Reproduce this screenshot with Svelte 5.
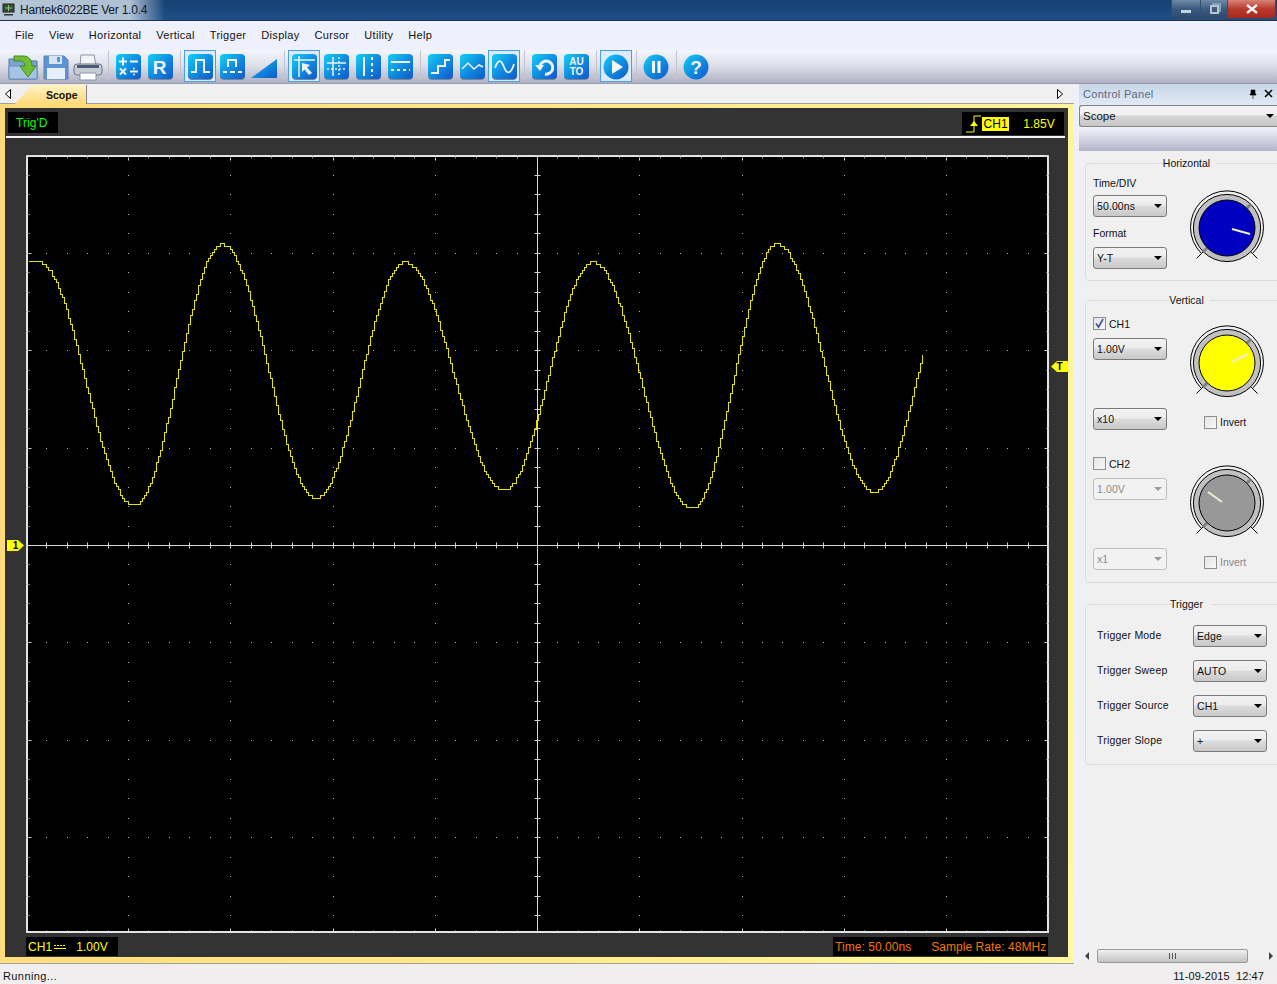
<script>
	const menus = ['File', 'View', 'Horizontal', 'Vertical', 'Trigger', 'Display', 'Cursor', 'Utility', 'Help'];

	// toolbar groups, a separator goes between each of them
	const tools = [
		[['open'], ['save'], ['print']],
		[['calc'], ['ref']],
		[['pulse', true], ['pulse2'], ['wedge']],
		[['pick', true], ['grid'], ['vcur'], ['hcur']],
		[['step'], ['tri'], ['sine', true]],
		[['undo'], ['auto']],
		[['play', true]],
		[['pause']],
		[['help']]
	];

	const triggerRows = [
		['Trigger Mode', 'Edge'],
		['Trigger Sweep', 'AUTO'],
		['Trigger Source', 'CH1'],
		['Trigger Slope', '+']
	];

	// plot geometry, in page pixels
	const cx = 537;
	const cy = 545;
	const dx = 20.45;
	const dy = 19.48;

	let dots = [];
	let ticks = [];
	for (let i = -25; i <= 25; i++) {
		const x = Math.round(cx + i * dx);
		const major = i % 5 === 0;
		for (let r = -4; r <= 4; r++) {
			if (i !== 0 && r !== 0) dots.push([x, Math.round(cy + r * 5 * dy)]);
		}
		ticks.push([x, cy - 3, x, cy + 3]);
		ticks.push([x, 157, x, 157 + (major ? 3 : 1)]);
		ticks.push([x, 931 - (major ? 3 : 1), x, 931]);
	}
	for (let j = -20; j <= 20; j++) {
		const y = Math.round(cy + j * dy);
		const major = j % 5 === 0;
		for (let c = -5; c <= 5; c++) {
			if (j !== 0 && c !== 0 && j % 5 !== 0) dots.push([Math.round(cx + c * 5 * dx), y]);
		}
		ticks.push([cx - 3, y, cx + 3, y]);
		ticks.push([28, y, 28 + (major ? 3 : 1), y]);
		ticks.push([1047 - (major ? 3 : 1), y, 1047, y]);
	}

	// extrema read off the reference, y snapped to 3px like the ADC steps
	const ext = [[38, 262], [133, 505], [221, 244], [315, 498], [404, 262], [503, 490], [592, 262], [691, 508], [776, 244], [873, 492], [960, 262]];
	let pts = [];
	let lastY = null;
	for (let x = 28; x <= 922; x += 2) {
		let k = 0;
		while (k < ext.length - 2 && x > ext[k + 1][0]) k++;
		const [x0, y0] = ext[k];
		const [x1, y1] = ext[k + 1];
		const t = Math.max(0, (x - x0) / (x1 - x0));
		const y = Math.round((y0 + ((y1 - y0) * (1 - Math.cos(Math.PI * t))) / 2) / 3) * 3 + 0.5;
		if (lastY !== null && y !== lastY) pts.push(x + 0.5 + ',' + lastY);
		pts.push(x + 0.5 + ',' + y);
		lastY = y;
	}
	const trace = pts.join(' ');
</script>

{#snippet sel(value, off = false)}
	<div class="sel" class:off><span>{value}</span><i></i></div>
{/snippet}

{#snippet knob(fill, x1, y1, x2, y2)}
	<svg class="knob" width="76" height="76" viewBox="-38 -38 76 76">
		<path d="M-25.5 25.5A36.5 36.5 0 1 1 25.5 25.5" fill="none" stroke="#000" />
		<path d="M-22 22L-30.5 30.5M22 22L30.5 30.5" stroke="#000" />
		<circle r="33.6" fill="#c0c0c0" stroke="#000" />
		<path d="M-20 20L-24 24M20 -20L24 -24" stroke="#808080" stroke-width="3" />
		<circle r="28" fill={fill} stroke="#000" />
		<line {x1} {y1} {x2} {y2} stroke="#eeeed0" stroke-width="2" />
	</svg>
{/snippet}

{#snippet check(label, on = false, off = false)}
	<label class="chk" class:off>
		<span class="box">
			{#if on}
				<svg width="11" height="11" viewBox="0 0 11 11"><path d="M2 5.5L4.5 9L9 1" fill="none" stroke="#4a5f9c" stroke-width="1.8" /></svg>
			{/if}
		</span>
		{label}
	</label>
{/snippet}

{#snippet icon(name)}
	{#if name === 'open'}
		<svg width="32" height="27" viewBox="0 0 32 27">
			<path d="M1 5h10l2 2h16v18H1z" fill="#7aa4d4" stroke="#4f74a4" />
			<path d="M1 12h28v13H1z" fill="#a4c4e6" stroke="#6a8cb8" />
			<path d="M6 2h9c6 0 9 4 9 10h4l-8 11-8-11h5c0-3-2-5-5-5H6z" fill="#74bc34" stroke="#3f8a22" />
		</svg>
	{:else if name === 'save'}
		<svg width="26" height="27" viewBox="0 0 26 27">
			<path d="M1 2h20l4 4v19H1z" fill="#5f94d4" stroke="#5a80b0" />
			<rect x="6" y="2" width="13" height="8" fill="#d7e4f2" />
			<rect x="14" y="3" width="3" height="5" fill="#5f94d4" />
			<rect x="4" y="14" width="18" height="11" fill="#e6eef8" />
		</svg>
	{:else if name === 'print'}
		<svg width="30" height="27" viewBox="0 0 30 27">
			<path d="M8 1h13l2 10H7z" fill="#f4f4f6" stroke="#8d93a0" />
			<rect x="1" y="10" width="28" height="11" rx="3" fill="#c8ccd6" stroke="#6f7682" />
			<rect x="4" y="11" width="22" height="3" fill="#4a5c78" />
			<path d="M7 19h16v7H7z" fill="#fff" stroke="#8d93a0" />
		</svg>
	{:else if name === 'wedge'}
		<svg width="28" height="25" viewBox="0 0 28 25"><path d="M1 23L27 4v19z" fill="url(#blue)" /></svg>
	{:else if name === 'play' || name === 'pause' || name === 'help'}
		<svg width="26" height="26" viewBox="0 0 26 26">
			<circle cx="13" cy="13" r="12.5" fill="url(#blue)" />
			{#if name === 'play'}
				<path d="M9 6l11 7-11 7z" fill="#f4f6f8" />
			{:else if name === 'pause'}
				<path d="M9 7h3v12H9zM14.5 7h3v12h-3z" fill="#f4f6f8" />
			{:else}
				<text x="13" y="20" class="glyph big">?</text>
			{/if}
		</svg>
	{:else}
		<svg width="25" height="26" viewBox="0 0 25 26">
			<rect x="0" y="1" width="25" height="25" rx="4" fill="#7c8598" />
			<rect x="0" y="0" width="25" height="25" rx="4" fill="url(#blue)" />
			<g fill="none" stroke="#eef2f0" stroke-width="2">
				{#if name === 'calc'}
					<path d="M3 7.5H11M7 3.5V11.5M14 7.5H22M4 14.5L10 20.5M10 14.5L4 20.5M14 17.5H22" />
					<circle cx="18" cy="14.5" r="1" fill="#eef2f0" stroke="none" />
					<circle cx="18" cy="20.5" r="1" fill="#eef2f0" stroke="none" />
				{:else if name === 'ref'}
					<text x="11.5" y="20" class="glyph big">R</text>
				{:else if name === 'pulse'}
					<path d="M3 18H8V6H16V18H22" />
				{:else if name === 'pulse2'}
					<path d="M8 13V6H16V13M3 18H7M10 18H15M18 18H22" />
				{:else if name === 'pick'}
					<path d="M7 2V23M2 6H23" stroke-width="1.5" />
					<path d="M10 9L10 18L12.5 15.5L17 21L20 19L15 13.5L18 11Z" fill="#eef2f0" stroke="none" />
				{:else if name === 'grid'}
					<path d="M9 3V22M3 9H22" stroke-width="1.5" />
					<path d="M15 3V22M3 15H22" stroke-width="1.5" stroke-dasharray="2 2" />
				{:else if name === 'vcur'}
					<path d="M8 3V22" />
					<path d="M16 3V22" stroke-dasharray="3 3" />
				{:else if name === 'hcur'}
					<path d="M3 8H22" />
					<path d="M3 16H22" stroke-dasharray="3 3" />
				{:else if name === 'step'}
					<path d="M3 19H10V12H17V6H22" />
				{:else if name === 'tri'}
					<path d="M2 15L8 9L14 15L19 11L23 13" stroke-width="1.5" />
				{:else if name === 'sine'}
					<path d="M3 14C6 5 9 5 12 13S19 20 22 10" stroke-width="1.8" />
				{:else if name === 'undo'}
					<path d="M8 12A6.5 6.5 0 1 1 13 20" stroke-width="3" />
					<path d="M3 11h9l-4 6z" fill="#eef2f0" stroke="none" />
				{:else if name === 'auto'}
					<text x="12.5" y="11" class="glyph small">AU</text>
					<text x="12.5" y="21" class="glyph small">TO</text>
				{/if}
			</g>
		</svg>
	{/if}
{/snippet}

<div class="win">
	<svg class="defs" width="0" height="0">
		<defs>
			<linearGradient id="blue" x1="0" y1="0" x2="1" y2="1">
				<stop offset="0" stop-color="#14d0f6" />
				<stop offset="0.55" stop-color="#1088e0" />
				<stop offset="1" stop-color="#1058c8" />
			</linearGradient>
		</defs>
	</svg>

	<header class="title">
		<svg class="app" width="13" height="13" viewBox="0 0 13 13">
			<rect x="1" y="1" width="11" height="8" fill="#3b4a3c" stroke="#222" />
			<path d="M6.5 2v6M3 5h7" stroke="#7fd06a" />
			<path d="M2 11h9v1.5H2z" fill="#333" />
		</svg>
		<span>Hantek6022BE Ver 1.0.4</span>
		<div class="caps">
			<div class="cap min"><b></b></div>
			<div class="cap max"><b></b></div>
			<div class="cap close">
				<svg width="14" height="10" viewBox="0 0 14 10"><path d="M2 1l10 8M12 1L2 9" stroke="#f4f4f4" stroke-width="2.4" /></svg>
			</div>
		</div>
	</header>

	<nav class="menu">
		{#each menus as m}
			<span>{m}</span>
		{/each}
	</nav>

	<div class="tools">
		{#each tools as group, g}
			{#if g > 0}<div class="sep"></div>{/if}
			{#each group as [name, active]}
				<div class="tool" class:active>{@render icon(name)}</div>
			{/each}
		{/each}
	</div>

	<div class="body">
		<section class="pane">
			<div class="tabs">
				<svg class="tabarrow" width="6" height="10" viewBox="0 0 6 10"><path d="M5.5 .5V9.5L.5 5Z" fill="#fff" stroke="#000" /></svg>
				<div class="tab">Scope</div>
				<svg class="tabarrow end" width="6" height="10" viewBox="0 0 6 10"><path d="M.5 .5V9.5L5.5 5Z" fill="#fff" stroke="#000" /></svg>
			</div>
			<div class="frame">
				<div class="dark">
					<div class="info">
						<div class="lab green">Trig'D</div>
						<div class="lab trig">
							<svg width="16" height="18" viewBox="0 0 16 18"><path d="M0 17H8V1H15" fill="none" stroke="#ff0" /><path d="M4 11H12L8 6Z" fill="#ff0" /></svg>
							<span class="hl">CH1</span>
							<span class="volts">1.85V</span>
						</div>
					</div>
					<div class="stage">
						<div class="marker one">1</div>
						<svg class="plot" width="1024" height="779" viewBox="26 155 1024 779">
							<rect x="27" y="156" width="1021" height="776" fill="#000" stroke="#e4e4e4" stroke-width="2" />
							{#each dots as [x, y]}
								<rect {x} {y} width="1" height="1" fill="#b0b0b0" />
							{/each}
							<path d="M28 545.5H1047M537.5 157V931" stroke="#d8d8d8" />
							{#each ticks as [x1, y1, x2, y2]}
								<line x1={x1 + 0.5} y1={y1 + 0.5} x2={x2 + 0.5} y2={y2 + 0.5} stroke="#d0d0d0" />
							{/each}
							<polyline points={trace} fill="none" stroke="#e4e400" stroke-width="1" shape-rendering="crispEdges" />
						</svg>
						<div class="marker tee">T</div>
					</div>
					<div class="foot">
						<div class="lab ch"><span>CH1</span><svg width="12" height="6" viewBox="0 0 12 6"><path d="M0 1.5H12" stroke="#ff0" stroke-dasharray="2 1" /><path d="M0 4.5H12" stroke="#ff0" /></svg><span class="amp">1.00V</span></div>
						<div class="lab orange"><span>Time: 50.00ns</span><span>Sample Rate: 48MHz</span></div>
					</div>
				</div>
			</div>
		</section>

		<aside class="side">
			<div class="sidehead">
				<span>Control Panel</span>
				<svg width="8" height="10" viewBox="0 0 8 10"><path d="M2 1h4v4h1v1H1V5h1zM4 6v4" fill="#000" stroke="#000" stroke-width="0.6" /></svg>
				<svg width="9" height="9" viewBox="0 0 9 9"><path d="M1 1l7 7M8 1L1 8" stroke="#000" stroke-width="1.5" /></svg>
			</div>
			<div class="combo"><span>Scope</span><i></i></div>
			<div class="band"></div>
			<div class="groups">
				<fieldset class="horiz">
					<legend>Horizontal</legend>
					<div class="col">
						<div class="cap1">Time/DIV</div>
						{@render sel('50.00ns')}
						<div class="cap2">Format</div>
						{@render sel('Y-T')}
					</div>
					<div class="knobcol">{@render knob('#0000c0', 5, 1, 23, 6)}</div>
				</fieldset>

				<fieldset class="vert">
					<legend>Vertical</legend>
					<div class="chan">
						<div class="col">
							{@render check('CH1', true)}
							{@render sel('1.00V')}
							<div class="low">{@render sel('x10')}</div>
						</div>
						<div class="knobcol">
							{@render knob('#ffff00', 5, -1, 21, -9)}
							<div class="inv">{@render check('Invert')}</div>
						</div>
					</div>
					<div class="chan two">
						<div class="col">
							{@render check('CH2')}
							{@render sel('1.00V', true)}
							<div class="low">{@render sel('x1', true)}</div>
						</div>
						<div class="knobcol">
							{@render knob('#989898', -19, -11, -5, -1)}
							<div class="inv">{@render check('Invert', false, true)}</div>
						</div>
					</div>
				</fieldset>

				<fieldset class="trig-group">
					<legend>Trigger</legend>
					{#each triggerRows as [name, val]}
						<div class="trow">
							<span>{name}</span>
							{@render sel(val)}
						</div>
					{/each}
				</fieldset>
			</div>
			<div class="hbar">
				<i class="sa left"></i>
				<div class="thumb"><span></span></div>
				<i class="sa right"></i>
			</div>
		</aside>
	</div>

	<footer class="status">
		<span class="run">Running...</span>
		<span>11-09-2015&nbsp; 12:47</span>
	</footer>
</div>

<style>
	:global(body) {
		margin: 0;
		background: #f0f0f0;
	}

	.win {
		width: 1277px;
		height: 984px;
		overflow: hidden;
		display: flex;
		flex-direction: column;
		font-family: 'Liberation Sans', Arial, sans-serif;
		font-size: 11px;
		color: #111;
	}

	.defs {
		position: absolute;
	}

	.title {
		height: 21px;
		box-sizing: border-box;
		display: flex;
		align-items: center;
		padding-left: 2px;
		gap: 5px;
		font-size: 12px;
		color: #101828;
		border-bottom: 1px solid #22344c;
		background:
			linear-gradient(90deg, rgba(190, 205, 220, 0.95) 0, rgba(190, 205, 220, 0.9) 130px, rgba(190, 205, 220, 0) 165px),
			linear-gradient(180deg, #16406f, #1e5088);
	}

	.title span {
		letter-spacing: -0.22px;
	}

	.app {
		margin-top: -2px;
	}

	.caps {
		margin-left: auto;
		margin-right: 1px;
		height: 18px;
		align-self: flex-start;
		display: flex;
		border: 1px solid #304a68;
		border-top: 0;
		border-radius: 0 0 4px 4px;
		overflow: hidden;
	}

	.cap {
		display: flex;
		align-items: center;
		justify-content: center;
		border-right: 1px solid #33506f;
		background: linear-gradient(180deg, #6f8aa8, #3a5a80 50%, #2a4a70);
	}

	.min {
		width: 28px;
	}

	.min b {
		width: 10px;
		height: 3px;
		margin-top: 5px;
		background: #c8d0d8;
	}

	.max {
		width: 26px;
	}

	.max b {
		width: 5px;
		height: 5px;
		border: 2px solid #b8c4d0;
		box-shadow: 2px -2px 0 0 #8a9cb0;
	}

	.close {
		width: 47px;
		border-right: 0;
		background: linear-gradient(180deg, #d88478, #b8392c 50%, #a8281e);
	}

	.menu {
		height: 29px;
		box-sizing: border-box;
		display: flex;
		align-items: center;
		gap: 15px;
		padding: 0 0 2px 15px;
		background: #eef1fb;
		letter-spacing: 0.3px;
	}

	.tools {
		height: 34px;
		box-sizing: border-box;
		display: flex;
		padding-left: 8px;
		border-bottom: 1px solid #9a9aa8;
		background: linear-gradient(180deg, #f4f6fd, #dfe1ea 45%, #b0b0c4);
	}

	.tool {
		width: 32px;
		height: 32px;
		box-sizing: border-box;
		display: flex;
		align-items: center;
		justify-content: center;
		padding-top: 2px;
	}

	.tool.active {
		border: 1px solid #4a9ef0;
		background: #dcebfb;
	}

	.sep {
		width: 8px;
		display: flex;
	}

	.sep::after {
		content: '';
		width: 1px;
		height: 30px;
		margin: 0 auto;
		background: #c4c4d0;
	}

	.glyph {
		font-family: 'Liberation Sans', Arial, sans-serif;
		font-weight: 700;
		font-size: 11px;
		fill: #f0f4f4;
		stroke: none;
		text-anchor: middle;
	}

	.glyph.big {
		font-size: 19px;
	}

	.glyph.small {
		font-size: 10px;
	}

	.body {
		flex: 1;
		display: flex;
		min-height: 0;
		background: #eef1fb;
	}

	.pane {
		width: 1074px;
		display: flex;
		flex-direction: column;
	}

	.tabs {
		height: 20px;
		box-sizing: border-box;
		display: flex;
		align-items: flex-end;
		background: #f0f0f0;
		border-bottom: 1px solid #a0a0a0;
	}

	.tabarrow {
		align-self: center;
		margin-left: 5px;
		margin-right: 4px;
	}

	.tabarrow.end {
		margin-left: auto;
		margin-right: 11px;
	}

	.tab {
		width: 72px;
		height: 19px;
		box-sizing: border-box;
		padding: 4px 0 0 31px;
		font-weight: 700;
		font-size: 10.5px;
		margin-bottom: -1px;
		border-right: 1px solid #888;
		background: linear-gradient(180deg, #fff3c4, #ffd97a);
		clip-path: polygon(0 100%, 17px 0, 100% 0, 100% 100%);
	}

	.frame {
		flex: 1;
		box-sizing: border-box;
		padding: 4px 6px 6px 5px;
		background: linear-gradient(100deg, #ffd97a, #ffe98a 50%, #fff8a0);
		border-bottom: 1px solid #a0a0a0;
	}

	.dark {
		height: 100%;
		display: flex;
		flex-direction: column;
		background: #333;
	}

	.info {
		height: 30px;
		box-sizing: border-box;
		display: flex;
		justify-content: space-between;
		padding: 4px 3px 0 2px;
		align-items: flex-start;
		margin-left: 1px;
		margin-right: 3px;
		border-bottom: 2px solid #f4f4f4;
	}

	.lab {
		background: #000;
		font-size: 12px;
		letter-spacing: 0.05px;
		display: flex;
		align-items: center;
		box-sizing: border-box;
	}

	.green {
		width: 50px;
		height: 21px;
		padding-left: 8px;
		color: #0f0;
	}

	.trig {
		width: 102px;
		height: 23px;
		margin-right: -2px;
		padding-left: 4px;
		color: #ff0;
	}

	.hl {
		background: #ff0;
		color: #000;
		padding: 0 1.5px;
		line-height: 14px;
	}

	.volts {
		margin-left: 14px;
	}

	.stage {
		position: relative;
		padding: 17px 0 0 21px;
		display: flex;
	}

	.plot {
		display: block;
	}

	.marker {
		position: absolute;
		height: 11px;
		background: #ff0;
		color: #000;
		font-size: 10px;
		line-height: 11px;
		text-align: center;
		font-weight: 700;
	}

	.one {
		left: 2px;
		top: 402px;
		width: 17px;
		clip-path: polygon(0 0, 11px 0, 100% 50%, 11px 100%, 0 100%);
	}

	.tee {
		left: 1046px;
		top: 223px;
		width: 17px;
		clip-path: polygon(6px 0, 100% 0, 100% 100%, 6px 100%, 0 50%);
	}

	.foot {
		display: flex;
		justify-content: space-between;
		padding: 3px 20px 0 21px;
	}

	.ch {
		width: 92px;
		height: 19px;
		padding-left: 2px;
		color: #ff0;
		gap: 2px;
	}

	.amp {
		margin-left: 8px;
	}

	.orange {
		width: 215px;
		height: 19px;
		padding: 0 1px 0 2px;
		color: #f07800;
		justify-content: flex-start;
		gap: 20px;
	}

	.side {
		width: 203px;
		display: flex;
		flex-direction: column;
	}

	.sidehead {
		height: 21px;
		margin-left: 5px;
		padding: 0 4px 2px;
		box-sizing: border-box;
		display: flex;
		align-items: center;
		gap: 7px;
		color: #5a6a80;
		letter-spacing: 0.3px;
		background: linear-gradient(180deg, #c8d6e6, #e0eaf6);
	}

	.sidehead span {
		margin-right: auto;
	}

	.combo {
		height: 22px;
		margin-left: 5px;
		box-sizing: border-box;
		display: flex;
		align-items: center;
		justify-content: space-between;
		padding: 0 3px;
		font-size: 11.5px;
		border: 1px solid #808080;
		border-right: 0;
		border-radius: 3px 0 0 3px;
		background: linear-gradient(180deg, #f4f4f4 0, #f0f0f0 45%, #d4d4d4 50%, #c8c8c8);
	}

	.combo i,
	.sel i {
		width: 0;
		height: 0;
		border: 4px solid transparent;
		border-top: 4px solid #000;
		border-bottom: 0;
	}

	.band {
		height: 24px;
		margin-left: 5px;
		background: linear-gradient(180deg, #f2f4fc, #b4b4c8);
	}

	.groups {
		flex: 1;
		margin-left: 5px;
		padding: 6px 0 0 6px;
		background: #f0f0f0;
		overflow: hidden;
	}

	fieldset {
		box-sizing: border-box;
		width: 204px;
		margin: 0;
		border: 1px solid #dcdcdc;
		border-radius: 4px;
		padding: 0 0 0 7px;
		display: flex;
	}

	legend {
		margin: 0 auto;
		padding: 0 2px;
		line-height: 12px;
		font-size: 10.5px;
		transform: translateX(-4px);
	}

	.horiz {
		height: 124px;
		margin-bottom: 13px;
		padding-top: 8px;
		gap: 22px;
	}

	.vert {
		height: 289px;
		margin-bottom: 15px;
		padding-top: 9px;
		flex-direction: column;
	}

	.trig-group {
		height: 167px;
		padding: 15px 0 0 11px;
		flex-direction: column;
		gap: 13px;
	}

	.trig-group legend {
		transform: translateX(-6px);
	}

	.col {
		width: 74px;
		flex: none;
		display: flex;
		flex-direction: column;
	}

	.cap1 {
		line-height: 12px;
		font-size: 10.5px;
		margin-bottom: 6px;
	}

	.cap2 {
		line-height: 12px;
		font-size: 10.5px;
		margin: 10px 0 8px;
	}

	.knobcol {
		display: flex;
		flex-direction: column;
		align-items: flex-start;
	}

	.horiz .knobcol {
		margin-top: 13px;
	}

	.knob {
		display: block;
		flex: none;
	}

	.chan {
		display: flex;
		gap: 22px;
	}

	.chan.two {
		margin-top: 25px;
	}

	.chan .knobcol {
		margin-top: 10px;
	}

	.chan .col {
		height: 115px;
	}

	.low {
		margin-top: 48px;
	}

	.inv {
		margin: 14px 0 0 15px;
	}

	.chk {
		height: 14px;
		margin: 2px 0 8px;
		display: flex;
		align-items: center;
		gap: 3px;
		font-size: 10.5px;
	}

	.inv .chk {
		margin: 0;
	}

	.chk.off {
		color: #888;
	}

	.box {
		width: 11px;
		height: 11px;
		border: 1px solid #8e8f8f;
		background: linear-gradient(135deg, #e4e4e4, #f8f8f8);
		display: flex;
		flex: none;
	}

	.sel {
		width: 74px;
		height: 22px;
		box-sizing: border-box;
		display: flex;
		align-items: center;
		justify-content: space-between;
		padding: 0 4px 0 3px;
		font-size: 10.5px;
		letter-spacing: 0.1px;
		border: 1px solid #7a7a7a;
		border-radius: 3px;
		background: linear-gradient(180deg, #f2f2f2 0, #ececec 45%, #dcdcdc 50%, #c8c8c8);
		flex: none;
	}

	.sel.off {
		color: #8c8c8c;
		border-color: #c0c0c0;
		background: #f2f2f2;
	}

	.sel.off i {
		border-top-color: #9a9a9a;
	}

	.trow {
		height: 22px;
		display: flex;
		align-items: center;
		font-size: 10.5px;
		letter-spacing: 0.2px;
	}

	.trow > span {
		width: 96px;
		margin-top: -2px;
	}

	.hbar {
		height: 16px;
		margin-left: 5px;
		box-sizing: border-box;
		display: flex;
		align-items: center;
		background: #f0f0f0;
		padding: 0 0 0 2px;
	}

	.sa {
		width: 0;
		height: 0;
		border: 4px solid transparent;
	}

	.sa.left {
		border-right-color: #444;
		margin-right: 8px;
	}

	.sa.right {
		border-left-color: #444;
		margin-left: auto;
	}

	.thumb {
		width: 151px;
		height: 14px;
		box-sizing: border-box;
		border: 1px solid #999;
		border-radius: 2px;
		background: linear-gradient(180deg, #f0f0f0, #d8d8d8 50%, #c4c4c4);
		display: flex;
		align-items: center;
		justify-content: center;
	}

	.thumb span {
		width: 7px;
		height: 6px;
		background: repeating-linear-gradient(90deg, #555 0 1px, transparent 1px 3px);
	}

	.status {
		height: 20px;
		flex: none;
		box-sizing: border-box;
		display: flex;
		justify-content: space-between;
		align-items: center;
		padding: 4px 13px 0 3px;
		background: #f0eeee;
		font-size: 11px;
		letter-spacing: 0.1px;
	}

	.run {
		letter-spacing: 0.4px;
	}
</style>
